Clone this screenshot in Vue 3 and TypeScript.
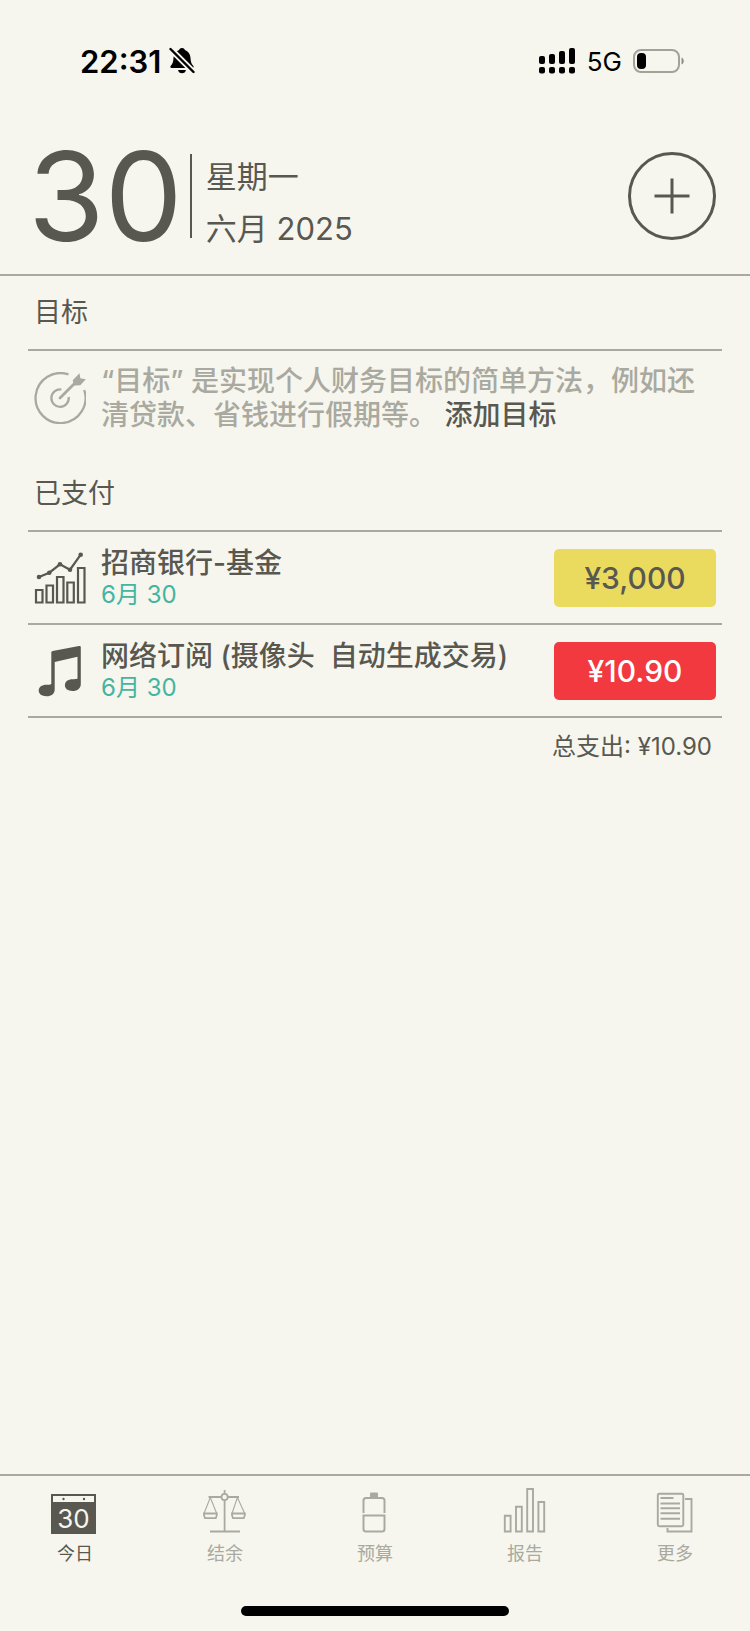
<script setup lang="ts">
interface Payment {
  icon: 'chart' | 'music'
  name: string
  date: string
  amount: string
  tone: 'yellow' | 'red'
}
interface Tab {
  id: 'today' | 'balance' | 'budget' | 'report' | 'more'
  label: string
}

const payments: Payment[] = [
  { icon: 'chart', name: '招商银行-基金', date: '6月 30', amount: '¥3,000', tone: 'yellow' },
  { icon: 'music', name: '网络订阅 (摄像头  自动生成交易)', date: '6月 30', amount: '¥10.90', tone: 'red' },
]
const tabs: Tab[] = [
  { id: 'today', label: '今日' },
  { id: 'balance', label: '结余' },
  { id: 'budget', label: '预算' },
  { id: 'report', label: '报告' },
  { id: 'more', label: '更多' },
]
const active = 'today'
</script>

<template>
  <div class="screen">
    <div class="status">
      <div class="status-side">
        <span class="clock">22:31</span>
        <svg class="bell" width="26" height="28" viewBox="0 0 26 28" aria-hidden="true">
          <path d="M13 1c1.500 0 2.600.8 2.900 2 3.400 1.100 5.400 4 5.600 7.800.2 4.200.8 6 2.700 7.900.9 1 .5 2.300-.9 2.300H2.700c-1.400 0-1.800-1.300-.9-2.300 1.900-1.900 2.500-3.700 2.700-7.900C4.700 7 6.700 4.100 10.100 3c.3-1.200 1.400-2 2.900-2z" />
          <path d="M9 23h8c-.4 2-1.900 3.300-4 3.300S9.400 25 9 23z" />
          <path d="M1.500 2 24.500 25" class="bell-gap" />
          <path d="M1.500 2 24.500 25" class="bell-slash" />
        </svg>
      </div>
      <div class="status-side">
        <svg width="37" height="26" viewBox="0 0 37 26" aria-hidden="true">
          <rect x="0" y="8" width="6" height="8" rx="2" />
          <rect x="10" y="6" width="6" height="10" rx="2" />
          <rect x="20" y="3" width="6" height="13" rx="2" />
          <rect x="30" y="0" width="6" height="16" rx="2" />
          <rect x="0" y="19" width="6" height="6.500" rx="2" />
          <rect x="10" y="19" width="6" height="6.500" rx="2" />
          <rect x="20" y="19" width="6" height="6.500" rx="2" />
          <rect x="30" y="19" width="6" height="6.500" rx="2" />
        </svg>
        <span class="network">5G</span>
        <svg width="52" height="26" viewBox="0 0 52 26" aria-hidden="true">
          <rect x="1" y="2" width="45" height="22" rx="7" fill="none" stroke="#a2a299" stroke-width="2" />
          <rect x="4" y="5" width="9" height="16" rx="4" />
          <path d="M48.500 9.500c3 1 3 6 0 7z" fill="#8f8f87" />
        </svg>
      </div>
    </div>

    <header class="header">
      <div class="day">30</div>
      <div class="date">
        <span>星期一</span>
        <span>六月 2025</span>
      </div>
      <button class="add" type="button" aria-label="添加">
        <svg width="36" height="36" viewBox="0 0 36 36" aria-hidden="true">
          <path d="M18 0.500v35M0.500 18h35" fill="none" stroke="currentColor" stroke-width="3" />
        </svg>
      </button>
    </header>

    <main class="content">
      <section>
        <h2 class="heading">目标</h2>
        <div class="goal">
          <svg class="icon muted" width="52" height="52" viewBox="0 0 52 52" aria-hidden="true">
            <g fill="none" stroke="currentColor" stroke-width="2.300">
              <path d="M34.500 2.400A25 25 0 1 0 50.200 18" />
              <path d="M27.300 17.500A8.700 8.700 0 1 0 34.700 25" />
              <path d="M26 26 42 10" stroke-width="2.800" stroke-linecap="round" />
            </g>
            <path d="M45.500 1.200 46.300 6.300 51.800 7.300 46.300 13.300 39.800 13.500 38.700 8.300z" fill="currentColor" />
          </svg>
          <p class="hint">“目标” 是实现个人财务目标的简单方法，例如还清贷款、省钱进行假期等。 <a href="#add-goal">添加目标</a></p>
        </div>
      </section>

      <section>
        <h2 class="heading">已支付</h2>
        <ul class="list">
          <li v-for="p in payments" :key="p.name" class="row">
            <svg v-if="p.icon === 'chart'" class="icon" width="52" height="52" viewBox="0 0 52 52" aria-hidden="true">
              <g fill="none" stroke="currentColor" stroke-width="2.200">
                <path d="M2 38h6.500v12.500H2zM12.500 33.500H19v17h-6.500zM23 25h6.500v25.500H23zM33.300 30.500h6.500v20h-6.500zM44 16h6.500v34.500H44z" />
                <path d="M5 25 15.300 20.700 26 12.300 36 17.700 46.700 2.700" />
              </g>
              <g fill="currentColor">
                <circle cx="5" cy="25" r="2.300" /><circle cx="15.300" cy="20.700" r="2.300" /><circle cx="26" cy="12.300" r="2.300" />
                <circle cx="36" cy="17.700" r="2.300" /><circle cx="46.700" cy="2.700" r="2.300" />
              </g>
            </svg>
            <svg v-else class="icon" width="52" height="52" viewBox="0 0 52 52" aria-hidden="true">
              <path d="M17.300 7.800c0-1 .5-1.600 1.400-1.800L45 1c1.200-.2 1.800.3 1.800 1.400V39c0 4.300-3.200 7-8.200 7-4.700 0-7.700-2.200-7.700-5.700 0-3.800 3-6 7.800-6 2 0 3.600 0 4.800-.7V11.700L20.700 17v27.500c0 4.300-3.200 6.800-8.200 6.800-4.800 0-7.800-2.200-7.800-5.700 0-3.700 3-5.900 7.800-5.900 2 0 3.600-.1 4.800-.8z" fill="currentColor" />
            </svg>
            <div class="info">
              <span class="name">{{ p.name }}</span>
              <span class="when">{{ p.date }}</span>
            </div>
            <button type="button" class="amount" :class="p.tone">{{ p.amount }}</button>
          </li>
        </ul>
        <p class="total">总支出: ¥10.90</p>
      </section>
    </main>

    <nav class="tabs">
      <button v-for="t in tabs" :key="t.id" type="button" class="tab" :class="{ active: t.id === active }">
        <svg width="52" height="52" viewBox="0 0 52 52" aria-hidden="true">
          <g v-if="t.id === 'today'">
            <rect x="2" y="9" width="45" height="40" fill="currentColor" />
            <rect x="4" y="11" width="41" height="6" fill="#f6f6ee" />
            <circle cx="14.500" cy="14" r="1.200" fill="currentColor" />
            <circle cx="35" cy="14" r="1.200" fill="currentColor" />
            <text x="24.500" y="42.500" text-anchor="middle" class="cal-day">30</text>
          </g>
          <g v-else-if="t.id === 'balance'" fill="none" stroke="currentColor" stroke-width="1.800">
            <path d="M9.500 12H22.500M28.700 12H40M25.600 5v4M25.600 15v31.500M11 46.500h30" />
            <circle cx="25.600" cy="12" r="3.100" />
            <path d="M5 28.500h12.800v1.700l-1 3H6L5 30.200zM33 28.500h12.800v1.700l-1 3H34l-1-3z" />
            <path d="M5 28.500 11.300 12.500 17.700 28.500M33 28.500 38.400 12.500 45.700 28.500" stroke-width="1.100" />
          </g>
          <g v-else-if="t.id === 'budget'" fill="none" stroke="currentColor" stroke-width="2">
            <path d="M14.500 28V15.500Q14.500 13 17 13H33Q35.500 13 35.500 15.500V28M14.500 30.500H35.500V44Q35.500 46.500 33 46.500H17Q14.500 46.500 14.500 44z" />
            <rect x="21" y="7.500" width="8" height="5" rx="1" fill="currentColor" stroke="none" />
          </g>
          <g v-else-if="t.id === 'report'" fill="none" stroke="currentColor" stroke-width="1.900">
            <path d="M5.800 30.800h5.800v15.700H5.800zM17 21.800h5.800v24.700H17zM28.200 4H34v42.500h-5.800zM39.400 17h5.800v29.500h-5.800z" />
          </g>
          <g v-else fill="none" stroke="currentColor" stroke-width="1.900">
            <rect x="8.800" y="8.800" width="25.500" height="32.500" rx="1.500" />
            <path d="M36 14h6.500v32.500H18.500V43M11.500 13H24.500M11.500 18.500H31M11.500 23.300H31M11.500 28.300H31M11.500 33.800H31" />
          </g>
        </svg>
        <span>{{ t.label }}</span>
      </button>
    </nav>
    <div class="home"></div>
  </div>
</template>

<style>
body {
  background: #f6f6ee;
}
</style>

<style scoped>
.screen {
  display: flex;
  flex-direction: column;
  min-height: 100vh;
  background: #f6f6ee;
  color: #595850;
  font-family: Inter, "Noto Sans CJK SC", sans-serif;
}
h2,
p,
ul {
  margin: 0;
  padding: 0;
  font-weight: 400;
}
button {
  padding: 0;
  border: 0;
  background: none;
  color: inherit;
  font: inherit;
  cursor: pointer;
}
svg {
  display: block;
  flex: none;
}
.status {
  display: flex;
  justify-content: space-between;
  align-items: center;
  box-sizing: border-box;
  height: 118px;
  padding: 4px 65px 0 80px;
  color: #000;
}
.status-side {
  display: flex;
  align-items: center;
  gap: 11px;
}
.clock {
  font-size: 31px;
  font-weight: 600;
}
.clock + svg {
  margin-left: -3px;
}
.bell-gap {
  stroke: #f6f6ee;
  stroke-width: 6;
}
.bell-slash {
  stroke: #000;
  stroke-width: 2.400;
  stroke-linecap: round;
}
.network {
  font-size: 26px;
}
.header {
  display: flex;
  align-items: center;
  box-sizing: border-box;
  height: 158px;
  padding: 0 34px 0 28px;
  border-bottom: 2px solid #a9a99f;
}
.day {
  padding-right: 7px;
  font-size: 124px;
  line-height: 124px;
}
.date {
  display: flex;
  flex-direction: column;
  justify-content: center;
  gap: 16px;
  box-sizing: border-box;
  height: 84px;
  padding: 13px 0 0 14px;
  border-left: 2px solid #595850;
  font-size: 31px;
  line-height: 36px;
}
.add {
  display: grid;
  place-items: center;
  box-sizing: border-box;
  width: 88px;
  height: 88px;
  margin-left: auto;
  border: 3px solid #595850;
  border-radius: 50%;
}
.content {
  flex: 1;
  padding: 0 28px;
}
.heading {
  padding-left: 6px;
  border-bottom: 2px solid #a9a99f;
  font-size: 27px;
  line-height: 73px;
}
.goal {
  display: flex;
  align-items: center;
  gap: 15px;
  padding: 13px 0 25px 6px;
}
.muted {
  color: #a9a99f;
}
.hint {
  color: #a9a99f;
  font-size: 28px;
  font-weight: 500;
  line-height: 34px;
}
.hint a {
  color: #595850;
  text-decoration: none;
}
.list {
  list-style: none;
}
.row {
  display: flex;
  align-items: center;
  gap: 15px;
  box-sizing: border-box;
  height: 93px;
  padding: 0 6px;
  border-bottom: 2px solid #a9a99f;
}
.info {
  display: flex;
  flex: 1;
  flex-direction: column;
  min-width: 0;
  padding-top: 2px;
  line-height: 32px;
}
.name {
  font-size: 28px;
  font-weight: 500;
  white-space: pre-wrap;
}
.when {
  color: #43b5a0;
  font-size: 24px;
}
.amount {
  width: 162px;
  height: 58px;
  border-radius: 5px;
  font-size: 30px;
  font-weight: 500;
}
.yellow {
  background: #eadb5f;
}
.red {
  background: #f1393f;
  color: #fff;
}
.total {
  padding: 11px 10px 0 0;
  font-size: 24px;
  line-height: 36px;
  text-align: right;
}
.tabs {
  display: grid;
  grid-template-columns: repeat(5, 1fr);
  padding-top: 9px;
  border-top: 2px solid #a9a99f;
}
.tab {
  display: flex;
  flex-direction: column;
  align-items: center;
  gap: 4px;
  color: #a9a99f;
  font-size: 18px;
  line-height: 26px;
}
.active {
  color: #595850;
}
.cal-day {
  fill: #f6f6ee;
  font-size: 26px;
}
.home {
  width: 268px;
  height: 10px;
  margin: 39px auto 15px;
  border-radius: 5px;
  background: #000;
}
</style>
